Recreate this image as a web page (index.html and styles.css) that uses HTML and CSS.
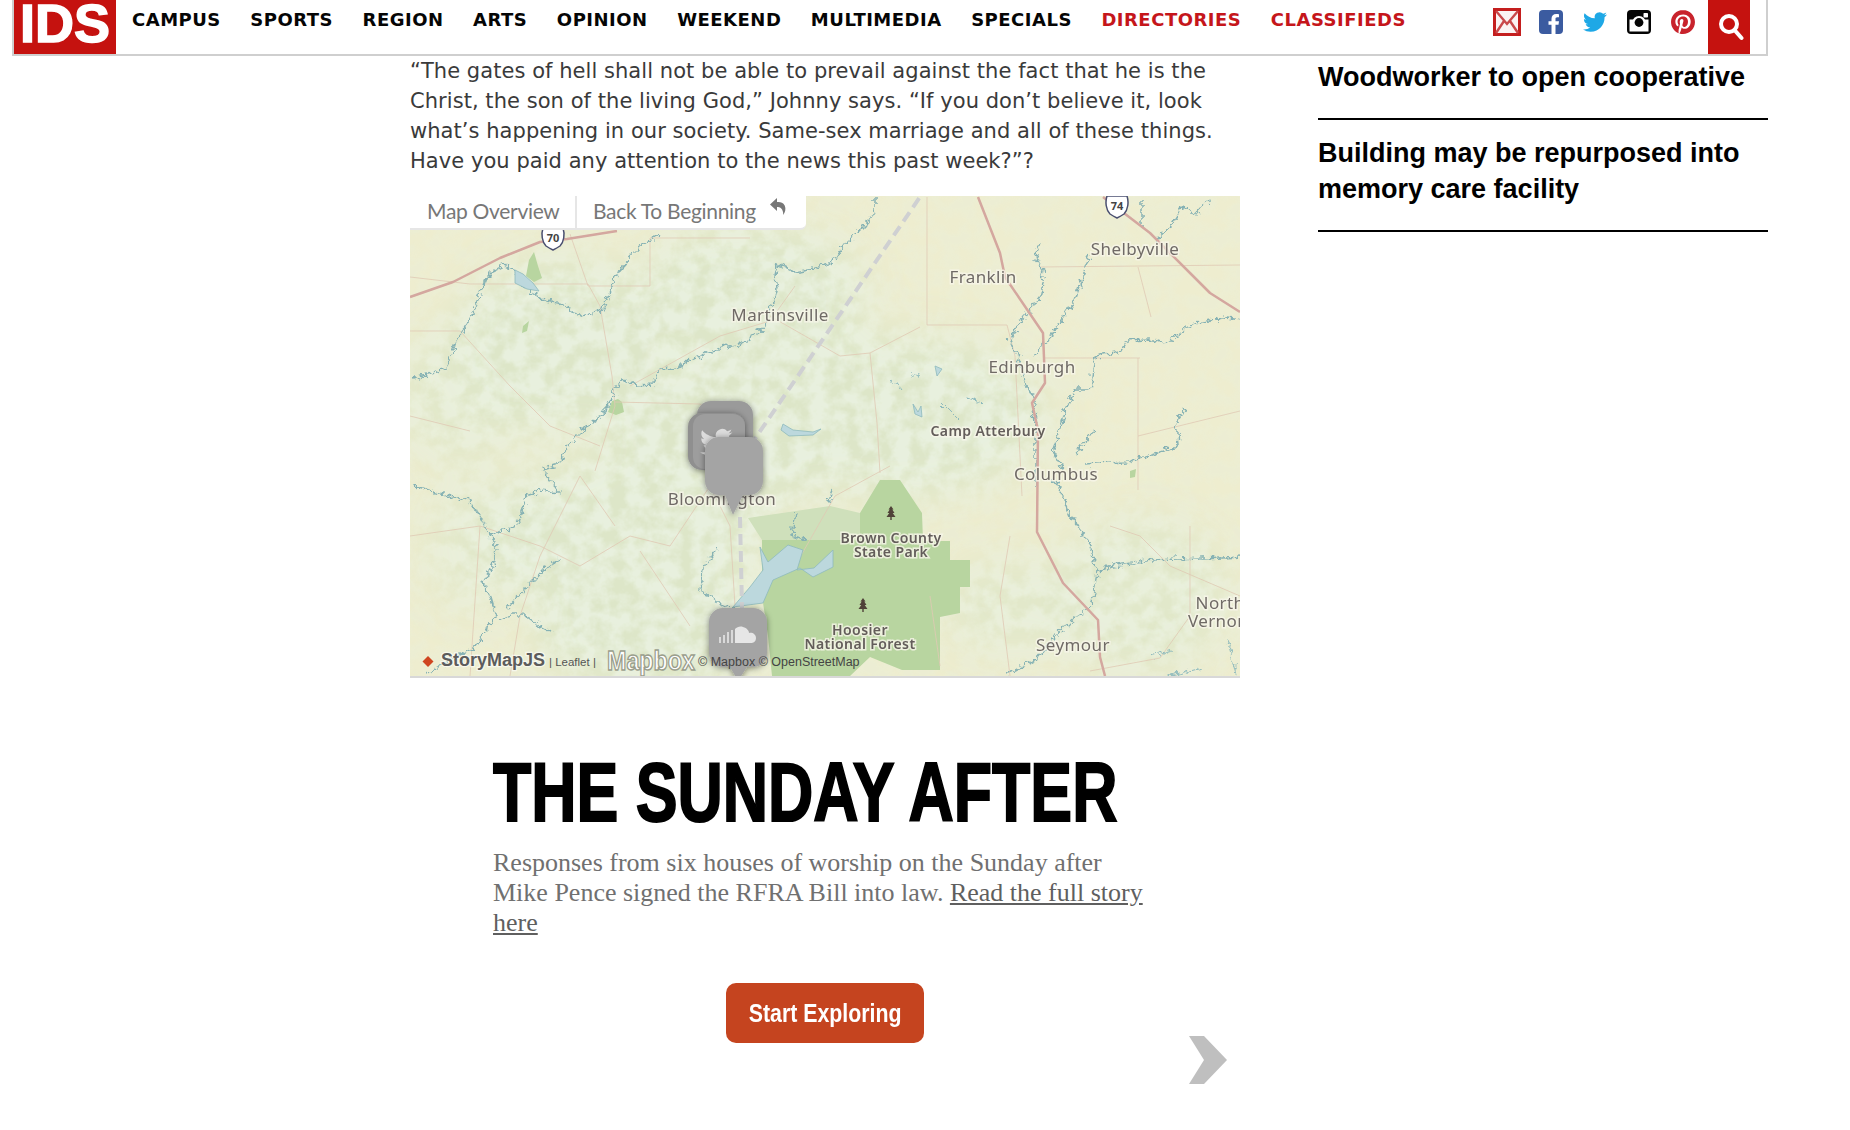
FILE: index.html
```html
<!DOCTYPE html>
<html lang="en">
<head>
  <meta charset="UTF-8" />
  <title>The Sunday After - IDS</title>
  <link rel="stylesheet" href="styles.css">
</head>
<body>

<header class="site-header">
  <a class="logo" href="#">IDS</a>
  <nav class="main-nav">
    <a href="#">CAMPUS</a>
    <a href="#">SPORTS</a>
    <a href="#">REGION</a>
    <a href="#">ARTS</a>
    <a href="#">OPINION</a>
    <a href="#">WEEKEND</a>
    <a href="#">MULTIMEDIA</a>
    <a href="#">SPECIALS</a>
    <a class="red" href="#">DIRECTORIES</a>
    <a class="red" href="#">CLASSIFIEDS</a>
  </nav>
  <div class="social">
    <svg class="ico-mail" width="28" height="28" viewBox="0 0 28 28">
      <rect width="28" height="28" fill="#c41e1e"/>
      <rect x="3" y="3" width="22" height="22" fill="#fbf3f3"/>
      <path d="M3 3l11 13L25 3M3 25l8-12M25 25l-8-12" fill="none" stroke="#c9494b" stroke-width="2.4"/>
    </svg>
    <svg width="24" height="24" viewBox="0 0 24 24">
      <rect width="24" height="24" rx="4" fill="#3b5ba0"/>
      <path d="M16.5 24v-9.300h3l.5-3.500h-3.500V9c0-1 .3-1.700 1.800-1.700H20V4.200c-.4 0-1.500-.2-2.800-.2-2.800 0-4.700 1.700-4.700 4.800v2.400H9.500v3.500h3V24z" fill="#fff"/>
    </svg>
    <svg width="24" height="24" viewBox="0 0 24 24">
      <path fill="#1ea8e6" d="M23.953 4.570a10 10 0 01-2.825.775 4.958 4.958 0 002.163-2.723c-.951.555-2.005.959-3.127 1.184a4.920 4.920 0 00-8.384 4.482C7.690 8.095 4.067 6.130 1.640 3.162a4.822 4.822 0 00-.666 2.475c0 1.710.870 3.213 2.188 4.096a4.904 4.904 0 01-2.228-.616v.060a4.923 4.923 0 003.946 4.827 4.996 4.996 0 01-2.212.085 4.936 4.936 0 004.604 3.417 9.867 9.867 0 01-6.102 2.105c-.390 0-.779-.023-1.170-.067a13.995 13.995 0 007.557 2.209c9.053 0 13.998-7.496 13.998-13.985 0-.210 0-.420-.015-.630A9.935 9.935 0 0024 4.590z"/>
    </svg>
    <svg width="24" height="24" viewBox="0 0 24 24">
      <rect width="24" height="24" rx="4" fill="#050505"/>
      <rect x="2.500" y="9.500" width="19" height="12" fill="#fff"/>
      <circle cx="12" cy="12.500" r="6.600" fill="#fff"/>
      <circle cx="12" cy="12.500" r="4.400" fill="#050505"/>
      <rect x="16.500" y="3" width="4.500" height="4.500" rx=".8" fill="#fff"/>
    </svg>
    <svg width="24" height="24" viewBox="0 0 24 24">
      <path fill="#c8232c" d="M12.017 0C5.396 0 .029 5.367.029 11.987c0 5.079 3.158 9.417 7.618 11.162-.105-.949-.199-2.403.041-3.439.219-.937 1.406-5.957 1.406-5.957s-.359-.720-.359-1.781c0-1.663.967-2.911 2.168-2.911 1.024 0 1.518.769 1.518 1.688 0 1.029-.653 2.567-.992 3.992-.285 1.193.600 2.165 1.775 2.165 2.128 0 3.768-2.245 3.768-5.487 0-2.861-2.063-4.869-5.008-4.869-3.410 0-5.409 2.562-5.409 5.199 0 1.033.394 2.143.889 2.741.099.120.112.225.085.345-.090.375-.293 1.199-.334 1.363-.053.225-.172.271-.401.165-1.495-.690-2.433-2.878-2.433-4.646 0-3.776 2.748-7.252 7.920-7.252 4.158 0 7.392 2.967 7.392 6.923 0 4.135-2.607 7.462-6.233 7.462-1.214 0-2.354-.629-2.758-1.379l-.749 2.848c-.269 1.045-1.004 2.352-1.498 3.146 1.123.345 2.306.535 3.550.535 6.607 0 11.985-5.365 11.985-11.987C23.970 5.390 18.592.026 11.985.026L12.017 0z"/>
    </svg>
    <a class="search-btn" href="#">
      <svg width="26" height="28" viewBox="0 0 26 28">
        <circle cx="11" cy="11" r="8" fill="none" stroke="#fff" stroke-width="4"/>
        <path d="M16.500 17l7 8" stroke="#fff" stroke-width="4" stroke-linecap="round"/>
      </svg>
    </a>
  </div>
</header>

<div class="page">
  <main class="article">
    <p class="quote">“The gates of hell shall not be able to prevail against the fact that he is the Christ, the son of the living God,” Johnny says. “If you don’t believe it, look what’s happening in our society. Same-sex marriage and all of these things. Have you paid any attention to the news this past week?”?</p>

    <div class="storymap">
      <svg class="map-svg" width="830" height="480" viewBox="0 0 830 480">
        <defs>
          <filter id="mottle" x="0" y="0" width="100%" height="100%">
            <feTurbulence type="fractalNoise" baseFrequency=".06" numOctaves="4" seed="11"/>
            <feColorMatrix values="0 0 0 0 .81  0 0 0 0 .875  0 0 0 0 .73  2.8 0 0 0 -.85"/>
          </filter>
          <filter id="soft"><feGaussianBlur stdDeviation="20"/></filter>
          <filter id="blur1"><feGaussianBlur stdDeviation=".55"/></filter>
          <filter id="blur2"><feGaussianBlur stdDeviation=".3"/></filter>
          <filter id="wiggle" x="-5%" y="-5%" width="110%" height="110%">
            <feTurbulence type="turbulence" baseFrequency=".11" numOctaves="2" seed="4" result="n"/>
            <feDisplacementMap in="SourceGraphic" in2="n" scale="9" xChannelSelector="R" yChannelSelector="G"/>
            <feGaussianBlur stdDeviation=".45"/>
          </filter>
          <filter id="pinshadow" x="-30%" y="-30%" width="160%" height="160%">
            <feDropShadow dx="0" dy="1" stdDeviation="3" flood-color="#000" flood-opacity=".45"/>
          </filter>
          <mask id="forest">
            <g filter="url(#soft)" fill="#fff">
              <ellipse cx="150" cy="150" rx="110" ry="90"/>
              <ellipse cx="340" cy="100" rx="120" ry="75"/>
              <ellipse cx="490" cy="220" rx="150" ry="85"/>
              <ellipse cx="320" cy="240" rx="130" ry="80"/>
              <ellipse cx="210" cy="340" rx="150" ry="80"/>
              <ellipse cx="240" cy="430" rx="120" ry="70"/>
              <ellipse cx="50" cy="200" rx="70" ry="70" opacity=".7"/>
              <ellipse cx="730" cy="400" rx="90" ry="80" opacity=".8"/>
              <ellipse cx="600" cy="410" rx="70" ry="50" opacity=".7"/>
              <ellipse cx="60" cy="350" rx="50" ry="70" opacity=".6"/>
            </g>
          </mask>
          <symbol id="tree" viewBox="0 0 10 14">
            <path d="M5 0l2.500 3.500H6.300L8.500 7H6.700L9.500 11H5.700v3H4.300v-3H.5L3.300 7H1.500L3.700 3.500H2.500z" fill="#4f4238"/>
          </symbol>
        </defs>

        <rect width="830" height="480" fill="#eeedcf"/>
        <rect width="830" height="480" filter="url(#mottle)" opacity=".3"/>
        <g mask="url(#forest)">
          <rect width="830" height="480" fill="#dde6c8"/>
          <rect width="830" height="480" filter="url(#mottle)"/>
        </g>

        <g filter="url(#blur1)">
          <!-- parks -->
          <path class="park" d="M352 344L450 344L450 317L470 284L490 284L512 317L513 345L540 345L540 364L560 364L560 391L550 391L550 417L530 421L530 474L492 474L460 461L440 480L362 480L358 440L352 400z"/>
          <path class="park-light" d="M338 322L420 310L450 317L450 344L352 344z"/>
          <path class="park" d="M119 64l5-8 4 14 4 12-8 4-8-6zM202 205l6-2 4 3 2 10-8 3-8-3zM113 130l6-5-2 10-5 2zM720 275l6-2-1 8-5 1z"/>

          <!-- county lines -->
          <path class="county" d="M0 81L60 88L178 88L190 110L202 180L205 210L185 275M60 235L0 220M205 206L290 208L340 240M160 38L178 90M178 90L240 90L240 42L340 42M0 135L50 135L100 190L140 230L190 250M220 190L310 140L360 125L385 90M517 1L517 129L597 129L605 160L612 300M460 157L510 131M460 157L467 227L470 277M360 120L430 160L460 157M633 162L730 162M741 121L728 71M728 162L728 294M630 71L830 69M700 330L730 340L760 370L830 400M728 240L830 215M385 370L425 300L480 270M780 330L780 420L750 462L680 475M520 400L530 470M600 340L590 400L600 480M0 340L70 330L130 350L170 370L220 340L260 350M230 355L280 430M205 330L170 280L130 360L110 420L100 480M70 330L60 480M260 350L300 290L320 330L325 410"/>
        </g>
        <g filter="url(#wiggle)">
          <!-- rivers -->
          <path class="river" d="M130 271L147 266L152 254L163 241L172 232L180 224L188 218L200 201L204 190L210 181L224 187L240 186L245 176L247 171L262 170L277 162L295 155L310 149L325 147L348 134L356 122L365 91L362 78L365 66L382 74L393 72L412 66L420 64L430 48L443 37L452 28L463 11L463 0"/>
          <path class="river" d="M0 181L14 176L33 172L40 155L47 137L56 125L62 109L68 95L73 81L82 72L92 67L102 72L107 81L120 95L133 102L145 104L157 109L165 119L180 115L190 111L198 92L207 71L225 52L247 36"/>
          <path class="river" d="M0 287L30 296L57 304L68 320L77 337L84 348L83 361L76 374L70 384L78 400L83 417L72 436L60 451L38 462L17 474M130 271L133 277L147 294L128 292L113 297L110 312L103 331L88 332L77 337M87 421L100 417L113 417L128 428L140 434M93 411L102 400L113 391L130 372L147 361"/>
          <path class="river" d="M830 358L790 360L740 362L700 368L685 374L680 407L663 420L643 437L625 460L593 477M685 374L675 340L657 317L647 291L640 280M830 121L813 119L780 126L753 146L737 141L713 142L707 154L683 159L678 191L663 191L653 214L647 234L640 254L650 270M627 46L622 57L632 71L628 97L613 117L598 141L605 157L612 184L622 201L623 234L623 288M678 57L663 101L647 124L637 141L623 157M797 1L783 17L770 7L757 27L743 44M730 1L730 27M682 231L663 257M773 211L765 221L767 247L713 264L673 267M383 314L380 337L393 341M417 304L420 290M290 371L305 351M290 371L288 391L307 404L323 411"/>
          <path class="river-thin" d="M500 178L510 175M480 180L490 192M530 205L545 220M555 200L570 205M815 440L825 480M790 470L750 480M740 458L760 452"/>
        </g>
        <g filter="url(#blur1)">
          <path class="lake" d="M350 351L358 366L378 349L393 354L387 374L404 372L423 354L423 371L403 381L390 372L363 384L353 407L323 411L340 391L353 374z"/>
          <path class="lake" d="M105 74l8 4 10 9 6 8-12-2-12-6zM373 228l10 6 20 2 8-3-8 6-24 1-8-6zM525 170l7 3-5 7zM503 208l5 8 3-6 1 11-7-3z"/>

          <!-- highways -->
          <path class="road" d="M0 101L43 86L90 62L130 46L157 43L207 35"/>
          <path class="road" d="M568 1L590 57L595 81L633 137L635 187L622 207L628 234L627 336L653 387L688 424L690 461L695 480"/>
          <path class="road" d="M693 1L740 37L780 77L800 97L830 116"/>

          <!-- route of the story -->
          <path class="route" d="M340 250L510 1"/>
          <path class="route" d="M330 321L332 412"/>
        </g>

        <g class="shield" transform="translate(132 32)">
          <path d="M1 0h20c2 6 1 14-3 18-3 2-5 3-7 4-2-1-4-2-7-4C0 14-1 6 1 0z" fill="#fff" stroke="#4a4f70" stroke-width="1.500"/>
          <text x="11" y="14" class="shield-num">70</text>
        </g>
        <g class="shield" transform="translate(696 0)">
          <path d="M1 0h20c2 6 1 14-3 18-3 2-5 3-7 4-2-1-4-2-7-4C0 14-1 6 1 0z" fill="#fff" stroke="#4a4f70" stroke-width="1.500"/>
          <text x="11" y="14" class="shield-num">74</text>
        </g>

        <g class="labels" filter="url(#blur2)">
          <text x="370" y="125">Martinsville</text>
          <text x="573" y="87">Franklin</text>
          <text x="725" y="59">Shelbyville</text>
          <text x="622" y="177">Edinburgh</text>
          <text x="646" y="284">Columbus</text>
          <text x="312" y="309">Bloomington</text>
          <text x="663" y="455">Seymour</text>
          <text x="810" y="413">North</text>
          <text x="808" y="431">Vernon</text>
        </g>
        <g class="labels small" filter="url(#blur2)">
          <text x="578" y="240">Camp Atterbury</text>
          <text x="481" y="347">Brown County</text>
          <text x="481" y="361">State Park</text>
          <text x="450" y="439">Hoosier</text>
          <text x="450" y="453">National Forest</text>
        </g>
        <use href="#tree" x="476" y="310" width="10" height="14"/>
        <use href="#tree" x="448" y="402" width="10" height="14"/>

        <!-- story pins -->
        <g filter="url(#pinshadow)"><rect x="287" y="205" width="56" height="56" rx="14" fill="#9a9a9a"/></g>
        <g filter="url(#pinshadow)">
          <rect x="278" y="217" width="57" height="57" rx="14" fill="#8f8f8f"/>
          <rect x="283" y="218" width="52" height="55" rx="12" fill="#9d9d9d"/>
          <path transform="translate(290 230) scale(1.350)" fill="#dcdcdc" d="M23.953 4.570a10 10 0 01-2.825.775 4.958 4.958 0 002.163-2.723c-.951.555-2.005.959-3.127 1.184a4.920 4.920 0 00-8.384 4.482C7.690 8.095 4.067 6.130 1.640 3.162a4.822 4.822 0 00-.666 2.475c0 1.710.870 3.213 2.188 4.096a4.904 4.904 0 01-2.228-.616v.060a4.923 4.923 0 003.946 4.827 4.996 4.996 0 01-2.212.085 4.936 4.936 0 004.604 3.417 9.867 9.867 0 01-6.102 2.105c-.390 0-.779-.023-1.170-.067a13.995 13.995 0 007.557 2.209c9.053 0 13.998-7.496 13.998-13.985 0-.210 0-.420-.015-.630A9.935 9.935 0 0024 4.590z"/>
        </g>
        <g filter="url(#pinshadow)">
          <path d="M309 241h30a14 14 0 0114 14v30a14 14 0 01-14 14h-6l-10 20-8-20h-6a14 14 0 01-14-14v-30a14 14 0 0114-14z" fill="#a4a4a4"/>
        </g>
        <g filter="url(#pinshadow)">
          <path d="M313 412h30a14 14 0 0114 14v31a14 14 0 01-14 14h-6l-9 14-8-14h-7a14 14 0 01-14-14v-31a14 14 0 0114-14z" fill="#a4a4a4"/>
          <path d="M310 441v6M314 439v8M318 436v11M322 434v13" stroke="#e6e6e6" stroke-width="1.600"/>
          <path d="M325 447v-14c2-2 5-3 8-2 4 1 6 4 6 6 3-1 7 1 7 5s-3 5-5 5z" fill="#e6e6e6"/>
        </g>

        <!-- attribution -->
        <path d="M18 460l5.500 5.500-5.500 5.500-5.500-5.500z" fill="#cf4520"/>
        <text class="brand" x="31" y="470">StoryMapJS</text>
        <text class="attr-small" x="139" y="470">| Leaflet |</text>
        <text class="mapbox" x="197" y="474" textLength="88" lengthAdjust="spacingAndGlyphs">Mapbox</text>
        <text class="attr-small dark" x="288" y="470">© Mapbox © OpenStreetMap</text>
      </svg>

      <div class="map-toolbar">
        <span class="map-btn overview">Map Overview</span>
        <span class="map-btn back">Back To Beginning
          <svg width="18" height="20" viewBox="0 0 18 20"><path d="M8 1L1 7.500 8 14V10c3 0 5 1 6 5 .2 1 .2 2 .2 3 2-3 3-6 1.500-9.500C14 5 11 4.800 8 5z" fill="#777"/></svg>
        </span>
      </div>
    </div>

    <section class="cover">
      <h1><span>THE SUNDAY AFTER</span></h1>
      <p class="cover-text">Responses from six houses of worship on the Sunday after Mike Pence signed the RFRA Bill into law. <a href="#">Read the full story here</a></p>
      <div class="cover-action"><a class="start-btn" href="#"><span>Start Exploring</span></a></div>
      <svg class="next-arrow" width="38" height="48" viewBox="0 0 38 48"><path d="M0 0h15l23 24-23 24H0l15-24z" fill="#bfbfbf"/></svg>
    </section>
  </main>

  <aside class="sidebar">
    <a class="side-story" href="#">Woodworker to open cooperative</a>
    <a class="side-story" href="#">Building may be repurposed into memory care facility</a>
  </aside>
</div>

</body>
</html>
```

FILE: styles.css
```css
html, body {
  margin: 0;
  background: #fff;
  overflow: hidden;
}
body {
  height: 1130px;
  font-family: "DejaVu Sans", sans-serif;
  color: #333;
}
a {
  color: inherit;
  text-decoration: none;
}

/* top bar */
.site-header {
  display: flex;
  box-sizing: border-box;
  width: 1756px;
  height: 56px;
  margin-left: 12px;
  border: 2px solid #cfcfcf;
  border-top: none;
}
.logo {
  width: 102px;
  height: 54px;
  background: #c5120f;
  color: #fff;
  font: bold 54px/46px "Liberation Sans", sans-serif;
  -webkit-text-stroke: 1.5px #fff;
  text-align: center;
}
.main-nav {
  display: flex;
  gap: 29.5px;
  margin-left: 16px;
  padding-top: 9px;
  font: bold 18px/22px "DejaVu Sans", sans-serif;
  letter-spacing: .5px;
  color: #050505;
}
.main-nav .red {
  color: #c5161b;
}
.social {
  display: flex;
  align-items: flex-start;
  gap: 20px;
  margin-left: auto;
  margin-right: 16px;
  padding-top: 10px;
}
.ico-mail {
  margin-top: -2px;
  margin-right: -2px;
}
.search-btn {
  display: flex;
  align-items: center;
  justify-content: center;
  box-sizing: border-box;
  width: 42px;
  height: 54px;
  margin: -10px 0 0 -7px;
  padding-left: 4px;
  background: #c5120f;
}

/* page */
.page {
  display: grid;
  grid-template-columns: 830px 450px;
  column-gap: 78px;
  margin-left: 410px;
}

.quote {
  margin: 0;
  font-size: 21px;
  line-height: 30px;
  letter-spacing: .05px;
  color: #3a3a3a;
}

/* story map */
.storymap {
  position: relative;
  width: 830px;
  height: 482px;
  margin-top: 20px;
  background: #d8d8d8;
  overflow: hidden;
}
.map-svg {
  display: block;
}
.map-toolbar {
  position: absolute;
  top: 0;
  left: 0;
  display: flex;
  height: 32px;
  background: #fff;
  border-bottom: 2px solid #e6e6e6;
  border-bottom-right-radius: 6px;
  font: 21px/30px Lato, sans-serif;
  letter-spacing: -.3px;
  color: #777;
}
.map-btn {
  display: flex;
  box-sizing: border-box;
}
.overview {
  width: 165px;
  padding-left: 17px;
}
.back {
  width: 231px;
  padding-left: 16px;
  border-left: 2px solid #e6e6e6;
}
.back svg {
  margin: 1px 19px 0 auto;
}

.park { fill: #b8d5a0; }
.park-light { fill: #cfe0bb; }
.county { fill: none; stroke: #e0c9b4; stroke-width: 1; opacity: .8; }
.river { fill: none; stroke: #86b2b4; stroke-width: 1.5; stroke-linejoin: round; }
.river-thin { fill: none; stroke: #8ebabd; stroke-width: 1; }
.lake { fill: #bcd8dd; stroke: #8ebabd; stroke-width: .8; }
.road { fill: none; stroke: #d4a79f; stroke-width: 2.5; stroke-linejoin: round; }
.route { fill: none; stroke: #cfd0d2; stroke-width: 4; stroke-dasharray: 11 6; }
.shield-num {
  font: bold 11px "Noto Sans", sans-serif;
  fill: #444;
  text-anchor: middle;
}
.labels text {
  font: 17px "Noto Sans", sans-serif;
  letter-spacing: .4px;
  fill: #6f6a66;
  stroke: #f7f6ea;
  stroke-width: 3px;
  stroke-opacity: .8;
  paint-order: stroke;
  text-anchor: middle;
}
.labels.small text {
  font-size: 14px;
  font-weight: 600;
  fill: #635d5a;
}
.brand {
  font: bold 18px "Liberation Sans", sans-serif;
  fill: #5c5c5c;
  stroke: #fff;
  stroke-width: 2.5px;
  stroke-opacity: .6;
  paint-order: stroke;
}
.attr-small {
  font: 11.5px "Liberation Sans", sans-serif;
  fill: #555;
}
.attr-small.dark {
  font-size: 12.5px;
  fill: #444;
}
.mapbox {
  font: bold 27px "Liberation Sans", sans-serif;
  fill: #fff;
  stroke: #9a9e8c;
  stroke-width: 1.4px;
}

/* first slide */
.cover {
  position: relative;
  height: 420px;
  padding-left: 83px;
}
.cover h1 {
  margin: 0;
  padding-top: 64px;
  font: bold 84px/100px "Liberation Sans", sans-serif;
  color: #000;
  white-space: nowrap;
}
.cover h1 span {
  display: inline-block;
  -webkit-text-stroke: 2px #000;
  transform: scaleX(.746);
  transform-origin: left center;
}
.cover-text {
  width: 660px;
  margin: 6px 0 0;
  font: 26px/30px "Liberation Serif", serif;
  color: #707070;
}
.cover-text a {
  text-decoration: underline;
  color: #5f5f5f;
}
.cover-action {
  display: flex;
  justify-content: center;
  margin: 45px 0 0 -83px;
}
.start-btn {
  display: block;
  width: 198px;
  height: 60px;
  border-radius: 10px;
  background: #c5441f;
  color: #fff;
  font: bold 26px/60px "Liberation Sans", sans-serif;
  text-align: center;
  white-space: nowrap;
}
.start-btn span {
  display: inline-block;
  transform: scaleX(.82);
}
.next-arrow {
  position: absolute;
  left: 779px;
  top: 358px;
}

/* sidebar */
.sidebar {
  display: flex;
  flex-direction: column;
}
.side-story {
  padding: 3px 0 23px;
  border-bottom: 2px solid #000;
  font: bold 27px/36px "Liberation Sans", sans-serif;
  color: #000;
}
.side-story + .side-story {
  padding-top: 15px;
}
```
